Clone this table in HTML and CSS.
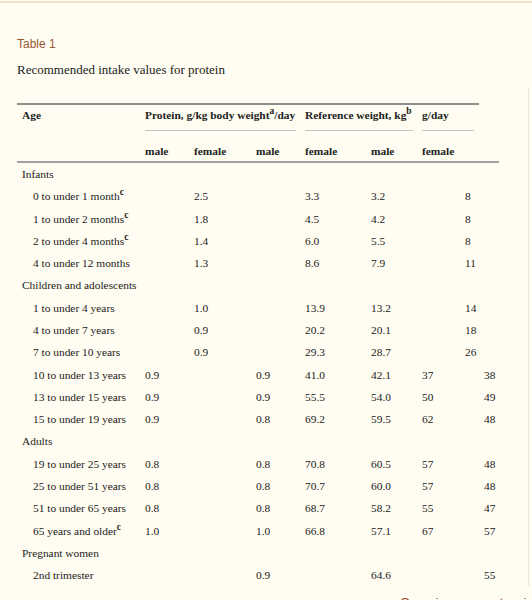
FILE: index.html
```html
<!DOCTYPE html>
<html lang="en">

<head>
    <meta charset="UTF-8">
    <meta name="viewport" content="width=device-width, initial-scale=1.0">
    <title>Table 1</title>
    <link rel="stylesheet" href="styles.css">
</head>

<body>
    <div class="top-line"></div>
    <div class="caption">
        <div class="label">Table 1</div>
        <div class="title">Recommended intake values for protein</div>
    </div>

    <div class="table-wrap">
        <div class="rule-top"></div>
        <table class="intake">
            <colgroup>
                <col class="c-age">
                <col class="c1">
                <col class="c2">
                <col class="c3">
                <col class="c4">
                <col class="c5">
                <col class="c6">
                <col class="c7">
                <col class="c8">
            </colgroup>
            <thead>
                <tr class="head-top">
                    <th class="age">Age</th>
                    <th colspan="3"><div class="span-rule protein">Protein, g/kg body weight<sup>a</sup>/day</div></th>
                    <th colspan="2"><div class="span-rule weight">Reference weight, kg<sup>b</sup></div></th>
                    <th colspan="3"><div class="span-rule gday">g/day</div></th>
                </tr>
                <tr class="head-sub">
                    <th></th>
                    <th>male</th>
                    <th>female</th>
                    <th>male</th>
                    <th>female</th>
                    <th>male</th>
                    <th colspan="3">female</th>
                </tr>
            </thead>
            <tbody>
                <tr class="group"><td colspan="9">Infants</td></tr>
                <tr><td class="sub">0 to under 1 month<sup>c</sup></td><td></td><td>2.5</td><td></td><td>3.3</td><td>3.2</td><td></td><td>8</td><td></td></tr>
                <tr><td class="sub">1 to under 2 months<sup>c</sup></td><td></td><td>1.8</td><td></td><td>4.5</td><td>4.2</td><td></td><td>8</td><td></td></tr>
                <tr><td class="sub">2 to under 4 months<sup>c</sup></td><td></td><td>1.4</td><td></td><td>6.0</td><td>5.5</td><td></td><td>8</td><td></td></tr>
                <tr><td class="sub">4 to under 12 months</td><td></td><td>1.3</td><td></td><td>8.6</td><td>7.9</td><td></td><td>11</td><td></td></tr>
                <tr class="group"><td colspan="9">Children and adolescents</td></tr>
                <tr><td class="sub">1 to under 4 years</td><td></td><td>1.0</td><td></td><td>13.9</td><td>13.2</td><td></td><td>14</td><td></td></tr>
                <tr><td class="sub">4 to under 7 years</td><td></td><td>0.9</td><td></td><td>20.2</td><td>20.1</td><td></td><td>18</td><td></td></tr>
                <tr><td class="sub">7 to under 10 years</td><td></td><td>0.9</td><td></td><td>29.3</td><td>28.7</td><td></td><td>26</td><td></td></tr>
                <tr><td class="sub">10 to under 13 years</td><td>0.9</td><td></td><td>0.9</td><td>41.0</td><td>42.1</td><td>37</td><td></td><td>38</td></tr>
                <tr><td class="sub">13 to under 15 years</td><td>0.9</td><td></td><td>0.9</td><td>55.5</td><td>54.0</td><td>50</td><td></td><td>49</td></tr>
                <tr><td class="sub">15 to under 19 years</td><td>0.9</td><td></td><td>0.8</td><td>69.2</td><td>59.5</td><td>62</td><td></td><td>48</td></tr>
                <tr class="group"><td colspan="9">Adults</td></tr>
                <tr><td class="sub">19 to under 25 years</td><td>0.8</td><td></td><td>0.8</td><td>70.8</td><td>60.5</td><td>57</td><td></td><td>48</td></tr>
                <tr><td class="sub">25 to under 51 years</td><td>0.8</td><td></td><td>0.8</td><td>70.7</td><td>60.0</td><td>57</td><td></td><td>48</td></tr>
                <tr><td class="sub">51 to under 65 years</td><td>0.8</td><td></td><td>0.8</td><td>68.7</td><td>58.2</td><td>55</td><td></td><td>47</td></tr>
                <tr><td class="sub">65 years and older<sup>c</sup></td><td>1.0</td><td></td><td>1.0</td><td>66.8</td><td>57.1</td><td>67</td><td></td><td>57</td></tr>
                <tr class="group"><td colspan="9">Pregnant women</td></tr>
                <tr><td class="sub">2nd trimester</td><td></td><td></td><td>0.9</td><td></td><td>64.6</td><td></td><td></td><td>55</td></tr>
            </tbody>
        </table>
    </div>

    <div class="open-link">Open in a separate window</div>
</body>

</html>
```

FILE: styles.css
```css
html,
body {
    height: 100%;
    overflow: hidden;
}

body {
    margin: 0;
    padding: 0 0 0 17px;
    background: #fffcf1;
    color: #222222;
    font-family: "Liberation Serif", "Times New Roman", serif;
}

/* thin rosy line along the top edge */
.top-line {
    height: 2px;
    margin: 1px 0 0 -17px;
    background: #f6dccc;
}

.caption .label {
    margin-top: 34px;
    font-family: "Liberation Sans", Arial, sans-serif;
    font-size: 12px;
    line-height: 14px;
    color: #985735;
}

.caption .title {
    margin-top: 11px;
    font-size: 13px;
    line-height: 16px;
}

.table-wrap {
    margin-top: 10px;
    width: 511px;
    padding-top: 15px;
    border-right: 1px solid #ebe7dc;
}

.rule-top {
    width: 462px;
    height: 2px;
    background: #8d8d8d;
}

.intake {
    width: 482px;
    table-layout: fixed;
    border-collapse: collapse;
    font-size: 11.4px;
}

.c-age { width: 128px; }
.c1 { width: 49px; }
.c2 { width: 62px; }
.c3 { width: 49px; }
.c4 { width: 66px; }
.c5 { width: 51px; }
.c6 { width: 43px; }
.c7 { width: 19px; }
.c8 { width: 15px; }

.intake th,
.intake td {
    padding: 0;
    text-align: left;
    vertical-align: top;
    white-space: nowrap;
}

.intake th {
    font-weight: bold;
}

.intake th.age {
    padding-left: 5px;
}

.head-top th {
    padding-top: 3px;
    line-height: 14px;
}

.span-rule {
    padding-bottom: 8px;
    border-bottom: 1px solid #c4c4c4;
}

.span-rule.protein,
.span-rule.weight {
    margin-right: 9px;
}

.span-rule.gday {
    width: 52px;
}

.head-sub th {
    padding: 13px 0 3px;
    line-height: 14px;
    border-bottom: 2px solid #a3a3a3;
}

.intake td {
    height: 22.28px;
    line-height: 22.28px;
}

.group td {
    padding-left: 5px;
}

.intake td.sub {
    padding-left: 16px;
}

sup {
    font-size: 9.5px;
    font-weight: bold;
    line-height: 0;
    vertical-align: 0.5em;
}

.open-link {
    margin-top: 9px;
    padding-left: 383px;
    font-family: "Liberation Sans", Arial, sans-serif;
    font-size: 13px;
    line-height: 16px;
    color: #a8452c;
    white-space: nowrap;
}
```
